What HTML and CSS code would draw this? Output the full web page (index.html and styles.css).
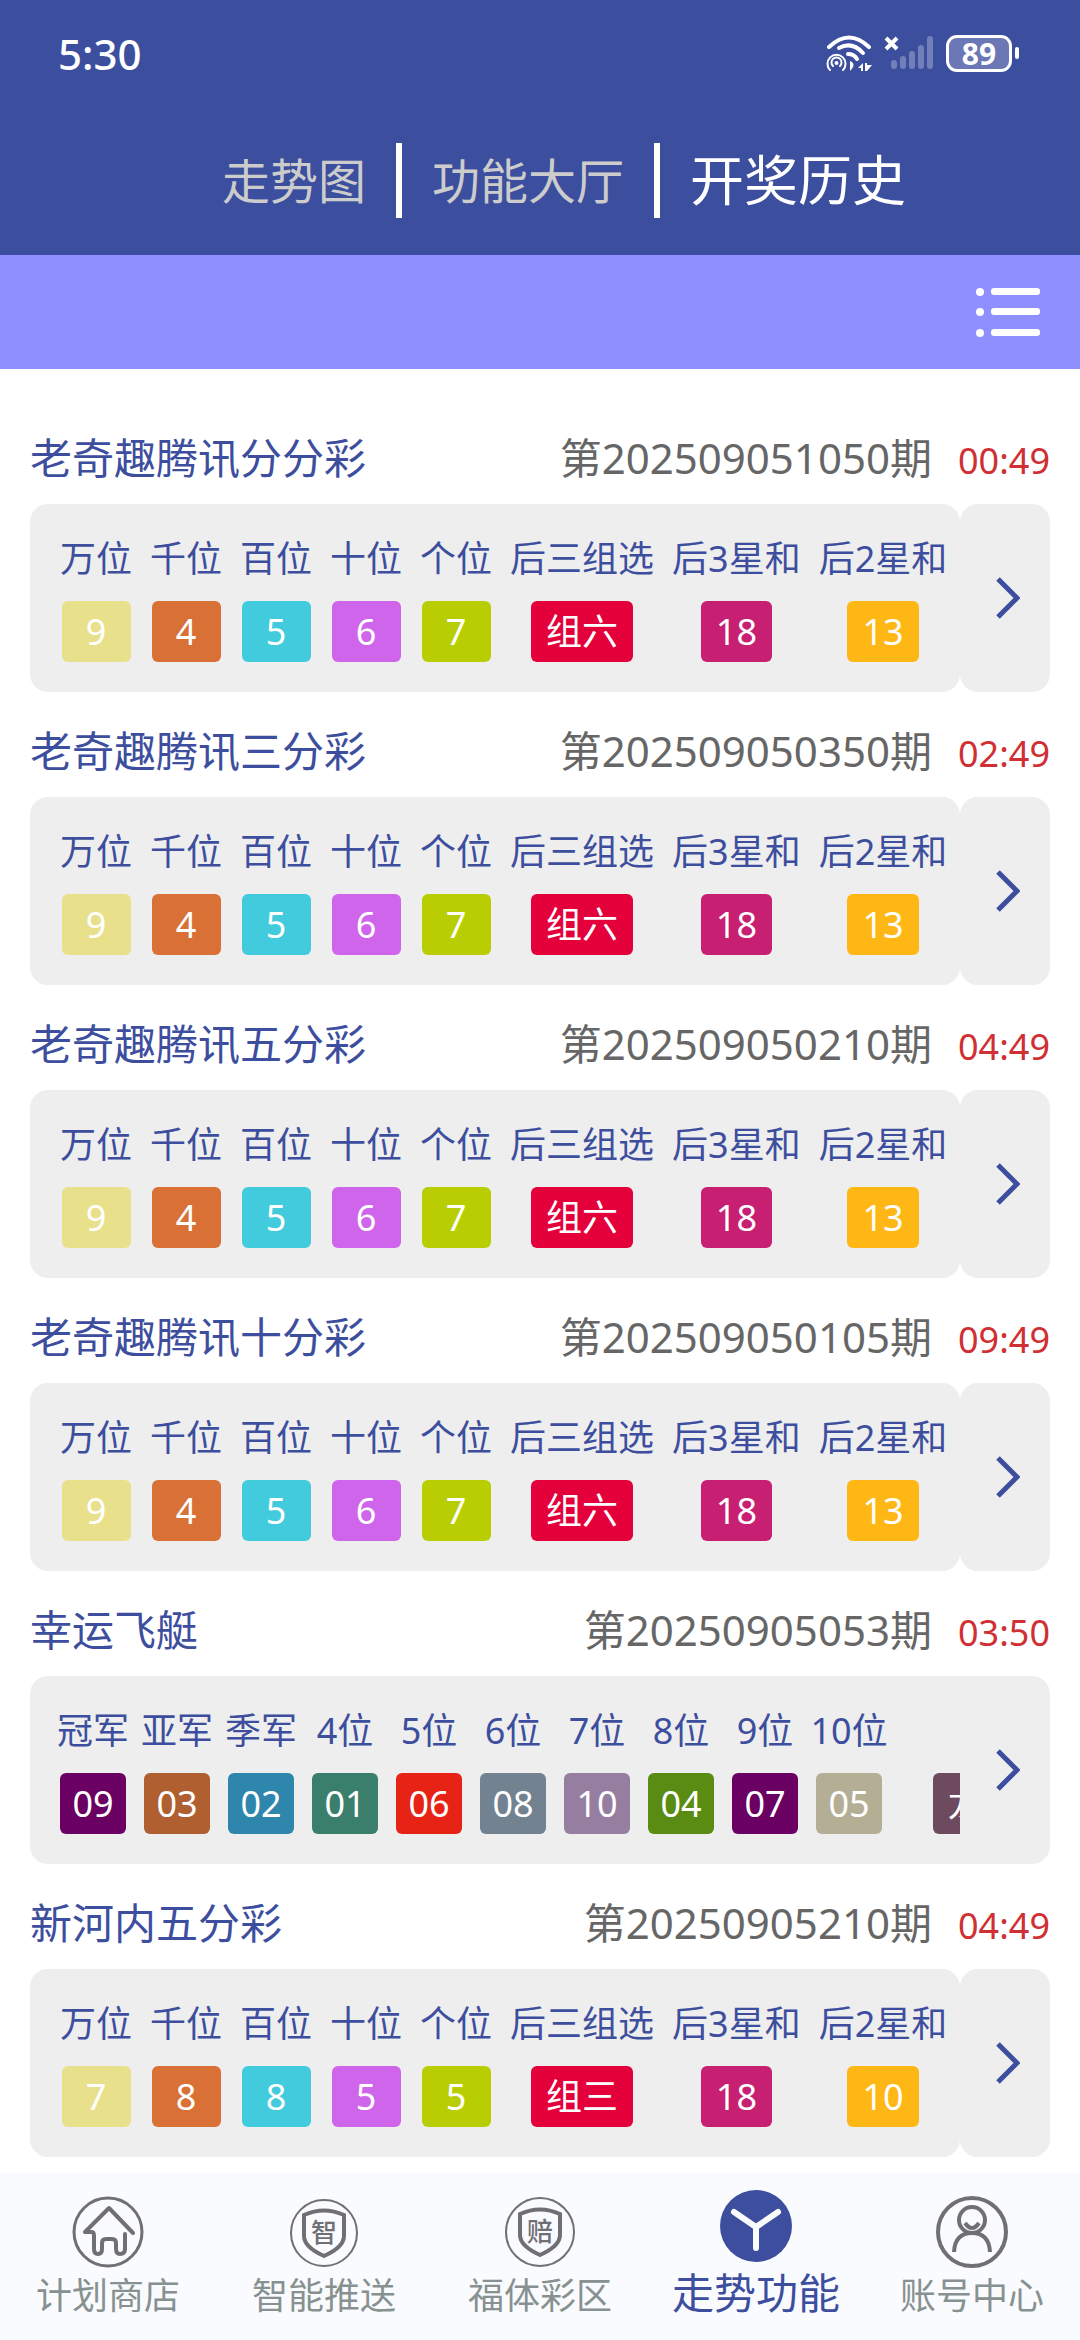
FILE: index.html
```html
<!DOCTYPE html>
<html lang="zh-CN">
<head>
<meta charset="utf-8">
<meta name="viewport" content="width=device-width, initial-scale=1">
<title>开奖历史</title>
<link rel="stylesheet" href="styles.css">
</head>
<body>
<header class="header">
  <div class="status">
    <span class="clock">5:30</span>
    <div class="status-icons">
      <svg class="wifi" width="46" height="37" viewBox="0 0 46 37" fill="none" stroke="currentColor" stroke-linecap="round">
        <path d="M3 12Q23-7 43 12" stroke-width="4"/>
        <path d="M13 13Q26 6 37 18" stroke-width="4"/>
        <path d="M22 19Q28 19 31 24" stroke-width="4"/>
        <path d="M4 35A9 9 0 1 1 17 35" stroke-width="2"/>
        <path d="M7 31A5 5 0 1 1 14 31" stroke-width="2"/>
        <circle cx="10.500" cy="28" r="2" fill="currentColor" stroke="none"/>
        <path d="M24 26Q31 29 24 36Z M37 28V36H35V33H32ZM39 28V36L41 36L46 30H41V28Z" fill="currentColor" stroke="none"/>
      </svg>
      <svg class="signal" width="50" height="36" viewBox="0 0 50 36" fill="none" stroke="currentColor">
        <path d="M2 3L13 14M13 3L2 14" stroke-width="4"/>
        <path d="M10 28V31M19 24V31M28 19V31M37 13V31M46 4V31" stroke-width="6" stroke-linecap="round" opacity=".28"/>
      </svg>
      <span class="battery"><span class="battery-cell">89</span></span>
    </div>
  </div>
  <nav class="tabs">
    <a class="tab" href="#trend">走势图</a>
    <a class="tab" href="#hall">功能大厅</a>
    <a class="tab tab-current" href="#history" aria-current="page">开奖历史</a>
  </nav>
</header>
<div class="toolbar">
  <button class="menu" type="button" aria-label="列表">
    <svg width="66" height="50" viewBox="0 0 66 50" fill="currentColor">
      <circle cx="5" cy="5" r="4"/><circle cx="5" cy="25" r="4"/><circle cx="5" cy="46" r="4"/>
      <rect x="16" y="1" width="49" height="7" rx="3"/><rect x="16" y="21" width="49" height="7" rx="3"/><rect x="16" y="42" width="49" height="7" rx="3"/>
    </svg>
  </button>
</div>
<main class="list" id="list"></main>
<nav class="bottom">
  <a class="nav" href="#shop">
    <svg width="72" height="72" viewBox="0 0 72 72" fill="none" stroke="currentColor" stroke-width="4" stroke-linecap="round" stroke-linejoin="round">
      <circle cx="36" cy="36" r="34" stroke-width="3"/>
      <path d="M61 37L37 12L13 36H20Q22 36 22 40V53Q22 58 26 58Q30 58 30 53V47Q30 43 34 43H40Q44 43 44 47V53Q44 58 48 58Q53 58 53 53V38"/>
    </svg>
    <span>计划商店</span>
  </a>
  <a class="nav" href="#push">
    <svg width="72" height="72" viewBox="0 0 72 72" fill="none" stroke="currentColor" stroke-width="4">
      <circle cx="36" cy="37" r="33" stroke-width="2"/>
      <path d="M16 19Q36 10 56 19V40Q56 51 36 60Q16 51 16 40Z"/>
      <text class="badge-text" x="36" y="46">智</text>
    </svg>
    <span>智能推送</span>
  </a>
  <a class="nav" href="#lottery">
    <svg width="72" height="72" viewBox="0 0 72 72" fill="none" stroke="currentColor" stroke-width="4">
      <circle cx="36" cy="36" r="34" stroke-width="2"/>
      <path d="M16 18Q36 9 56 18V39Q56 50 36 59Q16 50 16 39Z"/>
      <text class="badge-text" x="36" y="45">赔</text>
    </svg>
    <span>福体彩区</span>
  </a>
  <a class="nav nav-current" href="#features" aria-current="page">
    <svg width="72" height="72" viewBox="0 0 72 72">
      <circle cx="36" cy="36" r="36" fill="currentColor"/>
      <path d="M14 22L36 37L58 22M36 37V58" fill="none" stroke="#fafbff" stroke-width="6" stroke-linecap="round"/>
    </svg>
    <span>走势功能</span>
  </a>
  <a class="nav" href="#account">
    <svg width="72" height="72" viewBox="0 0 72 72" fill="none" stroke="currentColor" stroke-width="4">
      <circle cx="36" cy="36" r="34"/>
      <circle cx="36" cy="24" r="13"/>
      <path d="M18 56Q19 37 36 37Q53 37 54 56"/>
      <path d="M29 27Q36 37 43 27"/>
    </svg>
    <span>账号中心</span>
  </a>
</nav>
<script src="app.js"></script>
</body>
</html>
```

FILE: styles.css
```css
* { box-sizing: border-box; }

body {
  margin: 0;
  min-height: 100vh;
  display: flex;
  flex-direction: column;
  background: #fff;
  color: #3d4e9e;
  font-family: "Noto Sans", "Noto Sans CJK SC", sans-serif;
  font-size: 36px;
}

a { color: inherit; text-decoration: none; }
button { border: 0; padding: 0; background: none; color: inherit; font: inherit; }
svg { display: block; }

/* Header */
.header { background: #3c4e9e; color: #fff; padding-bottom: 37px; }
.status {
  display: flex;
  justify-content: space-between;
  align-items: center;
  height: 106px;
  padding: 0 61px 0 58px;
}
.clock { font-size: 42px; font-weight: 500; }
.status-icons { display: flex; align-items: center; gap: 12px; }
.battery { display: flex; align-items: center; gap: 3px; }
.battery::after { content: ""; width: 4px; height: 12px; border-radius: 2px; background: #fff; }
.battery-cell {
  width: 66px;
  height: 37px;
  border: 3px solid #fff;
  border-radius: 11px;
  background: #6b78b5;
  font-size: 30px;
  font-weight: 700;
  line-height: 31px;
  text-align: center;
}
.tabs {
  display: flex;
  justify-content: center;
  margin-top: 37px;
  padding-left: 48px;
  line-height: 75px;
}
.tab { padding: 0 30px; font-size: 48px; color: #ccc; }
.tab + .tab { border-left: 6px solid #fff; }
.tab-current { font-size: 54px; color: #fff; }

.toolbar {
  display: flex;
  justify-content: flex-end;
  align-items: center;
  height: 114px;
  padding-right: 39px;
  background: #8f8fff;
  color: #fff;
}

/* Draw list */
.list { flex: 1; padding: 30px 30px 16px; }
.draw { padding-top: 30px; }
.draw-head {
  display: flex;
  align-items: baseline;
  height: 58px;
  margin-bottom: 17px;
  line-height: 58px;
}
.name { flex: 1; margin: 0; font-size: 42px; font-weight: 400; }
.period { font-size: 42px; color: #666; }
.time { margin-left: 26px; color: #d02f33; }

.card { display: grid; grid-template-columns: minmax(0, 1fr) 90px; }
.results, .more { background: #eee; border-radius: 18px; }
.results { padding: 28px 0 30px 21px; overflow: auto hidden; scrollbar-width: none; }
.more { display: flex; align-items: center; justify-content: center; padding-left: 4px; color: #3d4e9e; }
.card-joined .results { border-radius: 18px 0 0 18px; }
.card-joined .more { border-radius: 0 18px 18px 0; }

.numbers { border-collapse: collapse; white-space: nowrap; text-align: center; }
.numbers th { padding: 0 9px; font-weight: 400; line-height: 54px; }
.numbers td { padding: 15px 9px 0; }
.chip {
  display: block;
  width: fit-content;
  min-width: 69px;
  margin: 0 auto;
  padding: 0 15px;
  border-radius: 6px;
  color: #fff;
  line-height: 61px;
}
.numbers-race th { min-width: 84px; padding: 0 3px; }
.numbers-race td { padding: 15px 0 0; }
.numbers-race .chip { min-width: 66px; padding: 0 12px; }
.numbers-race td:last-child { padding-left: 42px; }
.numbers-race td:last-child .chip { padding: 0 15px; }

.khaki { background: #e9e08c; }
.orange { background: #d97035; }
.cyan { background: #42cbdd; }
.violet { background: #cf65eb; }
.lime { background: #b9ce02; }
.red { background: #e4003a; }
.magenta { background: #c71f72; }
.amber { background: #ffb715; }
.purple { background: #6a0062; }
.brown { background: #b06030; }
.blue { background: #2e86ad; }
.teal { background: #3a7e6c; }
.scarlet { background: #e62315; }
.slate { background: #728291; }
.mauve { background: #967ea0; }
.green { background: #5a8c14; }
.sand { background: #b4ae95; }
.plum { background: #6e4a5e; }

/* Bottom navigation */
.bottom {
  position: sticky;
  bottom: 0;
  display: grid;
  grid-template-columns: repeat(5, 1fr);
  align-items: end;
  height: 167px;
  padding-bottom: 20px;
  background: #fafbff;
}
.nav {
  display: flex;
  flex-direction: column;
  align-items: center;
  gap: 4px;
  color: #87918f;
  line-height: 48px;
}
.nav svg { color: #707074; }
.nav-current, .nav-current svg { color: #3d4e9e; }
.nav-current { font-size: 42px; line-height: 54px; }
.badge-text { font-size: 26px; font-weight: 500; text-anchor: middle; fill: currentColor; stroke: none; }
```

FILE: app.js
```js
const standardLabels = ["万位", "千位", "百位", "十位", "个位", "后三组选", "后3星和", "后2星和"];
const standardColors = ["khaki", "orange", "cyan", "violet", "lime", "red", "magenta", "amber"];
const raceLabels = ["冠军", "亚军", "季军", "4位", "5位", "6位", "7位", "8位", "9位", "10位", ""];
const raceColors = ["purple", "brown", "blue", "teal", "scarlet", "slate", "mauve", "green", "purple", "sand", "plum"];

const draws = [
  { name: "老奇趣腾讯分分彩", period: "202509051050", time: "00:49", values: ["9", "4", "5", "6", "7", "组六", "18", "13"] },
  { name: "老奇趣腾讯三分彩", period: "202509050350", time: "02:49", values: ["9", "4", "5", "6", "7", "组六", "18", "13"] },
  { name: "老奇趣腾讯五分彩", period: "202509050210", time: "04:49", values: ["9", "4", "5", "6", "7", "组六", "18", "13"] },
  { name: "老奇趣腾讯十分彩", period: "202509050105", time: "09:49", values: ["9", "4", "5", "6", "7", "组六", "18", "13"] },
  { name: "幸运飞艇", period: "20250905053", time: "03:50", race: true, values: ["09", "03", "02", "01", "06", "08", "10", "04", "07", "05", "龙"] },
  { name: "新河内五分彩", period: "20250905210", time: "04:49", values: ["7", "8", "8", "5", "5", "组三", "18", "10"] },
];

function drawMarkup(draw) {
  const labels = draw.race ? raceLabels : standardLabels;
  const colors = draw.race ? raceColors : standardColors;
  const heads = labels.map((label) => `<th scope="col">${label}</th>`).join("");
  const cells = draw.values.map((value, i) => `<td><span class="chip ${colors[i]}">${value}</span></td>`).join("");
  return `
    <section class="draw">
      <div class="draw-head">
        <h2 class="name">${draw.name}</h2>
        <span class="period">第${draw.period}期</span>
        <span class="time">${draw.time}</span>
      </div>
      <div class="card${draw.race ? " card-joined" : ""}">
        <div class="results">
          <table class="numbers${draw.race ? " numbers-race" : ""}">
            <thead><tr>${heads}</tr></thead>
            <tbody><tr>${cells}</tr></tbody>
          </table>
        </div>
        <button class="more" type="button" aria-label="${draw.name}详情">
          <svg width="26" height="44" viewBox="0 0 26 44" fill="none" stroke="currentColor" stroke-width="5">
            <path d="M4 3L23 22L4 41"/>
          </svg>
        </button>
      </div>
    </section>`;
}

document.getElementById("list").innerHTML = draws.map(drawMarkup).join("");
```
